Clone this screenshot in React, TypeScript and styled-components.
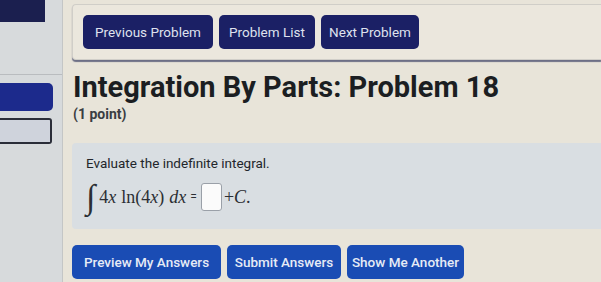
import styled, { createGlobalStyle } from 'styled-components';

const GlobalStyle = createGlobalStyle`
    html, body {
        margin: 0;
        padding: 0;
        background: #e8e4d9;
        overflow: hidden;
    }
    body {
        font-family: Roboto, "Liberation Sans", sans-serif;
        color: #1c1f24;
    }
`;

const Page = styled.div`
    display: flex;
    width: 601px;
    height: 282px;
    overflow: hidden;
`;

const Sidebar = styled.div`
    width: 62px;
    flex-shrink: 0;
    background: #d7dadc;
    border-right: 1px solid #c4c6c6;
    display: flex;
    flex-direction: column;
`;

const SideTop = styled.div`
    width: 45px;
    height: 22px;
    background: #1b1f4f;
`;

const SideRule = styled.div`
    margin-top: 52px;
    height: 1px;
    background: #b9bcbf;
`;

const SideActive = styled.div`
    margin-top: 8px;
    width: 53px;
    height: 28px;
    background: #1c2a8c;
    border-radius: 0 5px 5px 0;
`;

const SideBox = styled.div`
    margin-top: 7px;
    width: 50px;
    height: 22px;
    background: #cfd3dc;
    border: 2px solid #2a2d38;
    border-left: none;
    border-radius: 0 3px 3px 0;
`;

const Main = styled.div`
    flex: 1;
    padding: 4px 0 0 9px;
    display: flex;
    flex-direction: column;
`;

const NavCard = styled.div`
    height: 54px;
    background: #ebe7dd;
    border: 1px solid #d0cec8;
    border-right: none;
    border-radius: 4px 0 0 4px;
    box-shadow: 0 2px 1px #6d6f86;
    display: flex;
    align-items: center;
    gap: 6px;
    padding: 0 0 0 10px;
`;

const NavButton = styled.button<{ $width: number }>`
    width: ${p => p.$width}px;
    height: 34px;
    border: none;
    border-radius: 5px;
    background: #1b2065;
    color: #dfe2ee;
    font-family: Roboto, "Liberation Sans", sans-serif;
    font-size: 13.5px;
    padding: 0;
`;

const Title = styled.h1`
    margin: 11px 0 0 1px;
    font-size: 29px;
    font-weight: 700;
    line-height: 32px;
    color: #1b1e22;
`;

const Points = styled.div`
    margin: 3px 0 0 1px;
    font-size: 14px;
    line-height: 16px;
    font-weight: 700;
    color: #3a3d42;
`;

const ProblemBox = styled.div`
    margin-top: 21px;
    height: 86px;
    background: #d9dee2;
    border-radius: 4px 0 0 4px;
    padding: 12px 0 0 14px;
    box-sizing: border-box;
`;

const Prompt = styled.div`
    font-size: 13.5px;
    color: #23262b;
`;

const MathLine = styled.div`
    margin-top: 9px;
    display: flex;
    align-items: center;
    font-family: "Liberation Serif", "DejaVu Serif", serif;
    font-size: 18px;
    color: #2b2e33;
`;

const IntSign = styled.span`
    font-size: 34px;
    font-style: italic;
    margin-right: 4px;
    line-height: 1;
`;

const Var = styled.i`
    font-style: italic;
`;

const Space = styled.span<{ $w: number }>`
    display: inline-block;
    width: ${p => p.$w}px;
`;

const AnswerBlank = styled.span`
    display: inline-block;
    width: 19px;
    height: 26px;
    margin: 0 2px 0 4px;
    background: #fbfbfb;
    border: 1px solid #9aa0a8;
    border-radius: 3px;
`;

const Equals = styled.span`
    font-family: Roboto, "Liberation Sans", sans-serif;
    font-size: 12px;
    margin-left: 4px;
`;

const Actions = styled.div`
    margin-top: 16px;
    display: flex;
    gap: 6px;
`;

const ActionButton = styled.button<{ $width: number }>`
    width: ${p => p.$width}px;
    height: 34px;
    border: none;
    border-radius: 5px;
    background: #1a4cb4;
    color: #e6ebf6;
    font-family: Roboto, "Liberation Sans", sans-serif;
    font-size: 13.5px;
    font-weight: 500;
    padding: 0;
`;

export default function App() {
    return (
        <>
            <GlobalStyle />
            <Page>
                <Sidebar>
                    <SideTop />
                    <SideRule />
                    <SideActive />
                    <SideBox />
                </Sidebar>
                <Main>
                    <NavCard>
                        <NavButton $width={130}>Previous Problem</NavButton>
                        <NavButton $width={96}>Problem List</NavButton>
                        <NavButton $width={98}>Next Problem</NavButton>
                    </NavCard>
                    <Title>Integration By Parts: Problem 18</Title>
                    <Points>(1 point)</Points>
                    <ProblemBox>
                        <Prompt>Evaluate the indefinite integral.</Prompt>
                        <MathLine>
                            <IntSign>∫</IntSign>
                            4<Var>x</Var>
                            <Space $w={5} />
                            ln(4<Var>x</Var>)
                            <Space $w={5} />
                            <Var>dx</Var>
                            <Equals>=</Equals>
                            <AnswerBlank />
                            +<Var>C</Var>.
                        </MathLine>
                    </ProblemBox>
                    <Actions>
                        <ActionButton $width={149}>Preview My Answers</ActionButton>
                        <ActionButton $width={114}>Submit Answers</ActionButton>
                        <ActionButton $width={117}>Show Me Another</ActionButton>
                    </Actions>
                </Main>
            </Page>
        </>
    );
}
